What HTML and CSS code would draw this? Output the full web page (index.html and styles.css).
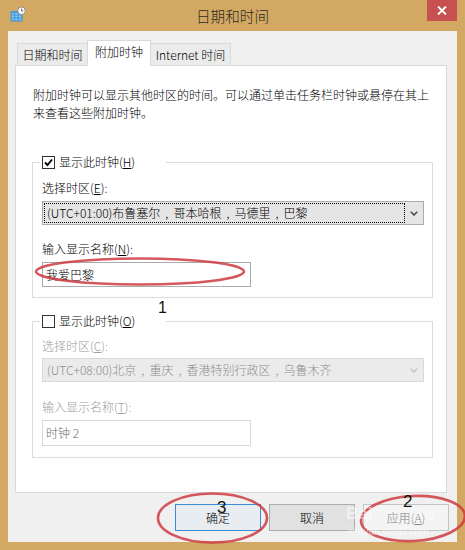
FILE: index.html
```html
<!DOCTYPE html>
<html lang="zh-CN">
<head>
<meta charset="utf-8">
<title>日期和时间</title>
<link rel="stylesheet" href="styles.css">
</head>
<body>
<div class="window">
  <div class="titlebar">
    <svg class="app-icon" width="16" height="16" viewBox="0 0 16 16">
      <rect x="1" y="6" width="11" height="9" fill="#7FC4EE" stroke="#3A8FD0" stroke-width="1"/>
      <path d="M1 9H12M1 12H12M4.7 6V15M8.3 6V15" stroke="#3A8FD0" stroke-width="0.8"/>
      <rect x="1" y="5" width="11" height="2" fill="#4A9BD8"/>
      <circle cx="11.5" cy="4.8" r="3.8" fill="#FFFFFF" stroke="#8C8C8C" stroke-width="1"/>
      <path d="M11.5 2.6V4.9H13.3" stroke="#555" stroke-width="0.9" fill="none"/>
    </svg>
    <div class="title">日期和时间</div>
    <div class="close">
      <svg width="10" height="9" viewBox="0 0 10 9"><path d="M1 0.5L9 8.5M9 0.5L1 8.5" stroke="#fff" stroke-width="1.9"/></svg>
    </div>
  </div>
  <div class="client">
    <div class="tabs">
      <div class="tab tab-first">日期和时间</div>
      <div class="tab tab-active">附加时钟</div>
      <div class="tab tab-last">Internet 时间</div>
    </div>
    <div class="panel">
      <p class="desc">附加时钟可以显示其他时区的时间。可以通过单击任务栏时钟或悬停在其上<br>来查看这些附加时钟。</p>
      <fieldset class="group group-one">
        <legend class="legend">
          <span class="checkbox">
            <svg width="11" height="11" viewBox="0 0 11 11"><path d="M2 5.5L4.5 8L9 2.5" stroke="#000" stroke-width="1.9" fill="none"/></svg>
          </span>
          <span>显示此时钟(<u>H</u>)</span>
        </legend>
        <div class="label label-first">选择时区(<u>E</u>):</div>
        <div class="select">
          <span class="focus">(UTC+01:00)布鲁塞尔<span class="sep">,</span>哥本哈根<span class="sep">,</span>马德里<span class="sep">,</span>巴黎</span>
          <span class="arrow"><svg width="8" height="5" viewBox="0 0 8 5"><path d="M0.8 0.8L4 4L7.2 0.8" stroke="#444" stroke-width="1.5" fill="none"/></svg></span>
        </div>
        <div class="label label-second">输入显示名称(<u>N</u>):</div>
        <div class="input">我爱巴黎</div>
      </fieldset>
      <fieldset class="group group-two">
        <legend class="legend">
          <span class="checkbox"></span>
          <span>显示此时钟(<u>O</u>)</span>
        </legend>
        <div class="label label-first off">选择时区(<u>C</u>):</div>
        <div class="select select-off">
          <span class="focus">(UTC+08:00)北京<span class="sep">,</span>重庆<span class="sep">,</span>香港特别行政区<span class="sep">,</span>乌鲁木齐</span>
          <span class="arrow"><svg width="8" height="5" viewBox="0 0 8 5"><path d="M0.8 0.8L4 4L7.2 0.8" stroke="#C4C4C4" stroke-width="1.5" fill="none"/></svg></span>
        </div>
        <div class="label label-second off">输入显示名称(<u>T</u>):</div>
        <div class="input input-off">时钟 2</div>
      </fieldset>
    </div>
    <div class="buttons">
      <div class="btn btn-default">确定</div>
      <div class="btn">取消</div>
      <div class="btn btn-off">应用(<u>A</u>)</div>
    </div>
  </div>

  <svg class="marks" width="465" height="550" viewBox="0 0 465 550">
    <ellipse cx="140" cy="271.5" rx="104" ry="13" fill="none" stroke="#CC3B3F" stroke-opacity="0.85" stroke-width="2.6"/>
    <ellipse cx="212.5" cy="518" rx="54.5" ry="24.5" fill="none" stroke="#CC3B3F" stroke-opacity="0.85" stroke-width="2.6"/>
    <ellipse cx="413" cy="518.5" rx="52" ry="22.5" fill="none" stroke="#CC3B3F" stroke-opacity="0.85" stroke-width="2.6" transform="rotate(-3 413 518.5)"/>
  </svg>
  <span class="num num-one">1</span>
  <span class="num num-two">2</span>
  <span class="num num-three">3</span>
  <span class="wm wm-logo">Bai<span class="wm-cn">经验</span></span>
  <span class="wm wm-url">jingyan.baidu.com</span>
</div>
</body>
</html>
```

FILE: styles.css
```css
* { box-sizing: border-box; }

body {
  margin: 0;
  width: 465px;
  height: 550px;
  overflow: hidden;
  background: #D2A862;
  font-family: "Noto Sans CJK SC", "Noto Sans", sans-serif;
  font-size: 12px;
  font-weight: 300;
  color: #000;
}

.window {
  position: relative;
  width: 465px;
  height: 550px;
  display: flex;
  flex-direction: column;
}

.titlebar {
  height: 31px;
  display: flex;
  align-items: flex-start;
}

.app-icon {
  margin: 6px 0 0 10px;
  flex: none;
}

.title {
  flex: 1;
  padding-left: 12px;
  text-align: center;
  line-height: 31px;
  font-size: 14.6px;
  color: #2E2A22;
}

.close {
  width: 30px;
  height: 21px;
  margin-right: 8px;
  background: #C75050;
  display: flex;
  align-items: center;
  justify-content: center;
}

.client {
  flex: 1;
  margin: 0 8px 8px;
  background: #F0F0F0;
  padding: 9px 8px 0 7px;
  display: flex;
  flex-direction: column;
}

.tabs {
  height: 25px;
  display: flex;
  align-items: flex-end;
  padding-left: 2px;
}

.tab {
  height: 22px;
  line-height: 21px;
  font-size: 12px;
  text-align: center;
  background: #EBEBEB;
  border: 1px solid #D9D9D9;
  border-bottom: none;
  color: #000;
  white-space: nowrap;
}

.tab-first { width: 70px; border-right: none; }
.tab-last { width: 80px; border-left: none; }

.tab-active {
  position: relative;
  z-index: 1;
  width: 64px;
  height: 26px;
  margin-bottom: -1px;
  line-height: 22px;
  background: #FFFFFF;
}

.panel {
  height: 428px;
  margin-right: 2px;
  background: #FFFFFF;
  border: 1px solid #D9D9D9;
  padding: 20px 13px 0 16px;
}

.desc {
  margin: 0;
  padding-left: 1px;
  line-height: 18px;
  font-size: 12px;
  white-space: nowrap;
}

.group {
  margin: 0;
  padding: 0 8px 10px 9px;
  border: 1px solid #DCDCDC;
  min-width: 0;
}

.group-one { margin-top: 32px; }
.group-two { margin-top: 15px; padding-bottom: 11px; }

.legend {
  width: 126px;
  height: 16px;
  margin-left: -2px;
  padding: 0 0 0 2px;
  display: flex;
  align-items: center;
  gap: 4px;
  line-height: 16px;
}

.checkbox {
  width: 13px;
  height: 13px;
  border: 1px solid #333333;
  background: #FFFFFF;
  display: flex;
  align-items: center;
  justify-content: center;
  flex: none;
}

.label {
  line-height: 16px;
  height: 16px;
}

.group-one .label-first { margin-top: 10px; }
.group-one .label-second { margin-top: 16px; }
.group-two .label-first { margin-top: 9px; }
.group-two .label-second { margin-top: 17px; }

.off { color: #A0A0A0; }

.select {
  margin-top: 5px;
  width: 382px;
  height: 24px;
  border: 1px solid #ACACAC;
  background: #E5E5E5;
  display: flex;
  align-items: stretch;
}

.group-two .select { margin-top: 4px; }

.focus {
  flex: 1;
  margin: 1px 0 1px 1px;
  border: 1px dotted #000;
  padding-left: 2px;
  line-height: 18px;
  white-space: nowrap;
}

.sep {
  display: inline-block;
  width: 13px;
  text-align: center;
}

.arrow {
  width: 18px;
  display: flex;
  align-items: center;
  justify-content: center;
}

.select-off {
  background: #EBEBEB;
  border-color: #D9D9D9;
  color: #8E8E8E;
}

.select-off .focus { border-color: transparent; }

.input {
  margin-top: 5px;
  width: 209px;
  height: 25px;
  border: 1px solid #ABABAB;
  background: #FFFFFF;
  padding-left: 3px;
  line-height: 23px;
}

.input-off {
  height: 26px;
  line-height: 24px;
  border-color: #D9D9D9;
  color: #6D6D6D;
}

.buttons {
  margin-top: 11px;
  display: flex;
  justify-content: flex-end;
  gap: 8px;
}

.btn {
  width: 86px;
  height: 27px;
  border: 1px solid #ADADAD;
  background: #E1E1E1;
  text-align: center;
  line-height: 25px;
}

.btn-default {
  border-color: #3C8BD6;
  background: #E8EDF2;
}

.btn-off {
  border-color: #C4C4C4;
  background: #F4F4F4;
  color: #838383;
}

.marks {
  position: absolute;
  left: 0;
  top: 0;
  pointer-events: none;
}

.num {
  position: absolute;
  font-family: "Liberation Sans", Arial, sans-serif;
  font-weight: normal;
  line-height: 1;
  color: #111;
}

.num-one { left: 158px; top: 300px; font-size: 16px; }
.num-two { left: 403px; top: 493px; font-size: 17px; }
.num-three { left: 217px; top: 499px; font-size: 17px; }

.wm {
  position: absolute;
  color: rgba(255, 255, 255, 0.55);
  font-family: "Liberation Sans", Arial, sans-serif;
  line-height: 1;
}

.wm-logo {
  left: 346px;
  top: 505px;
  font-size: 17px;
  font-weight: bold;
}

.wm-cn {
  margin-left: 36px;
  font-family: "Noto Sans CJK SC", sans-serif;
  font-size: 13px;
  font-weight: normal;
}

.wm-url {
  left: 348px;
  top: 527px;
  font-size: 10px;
}
```
